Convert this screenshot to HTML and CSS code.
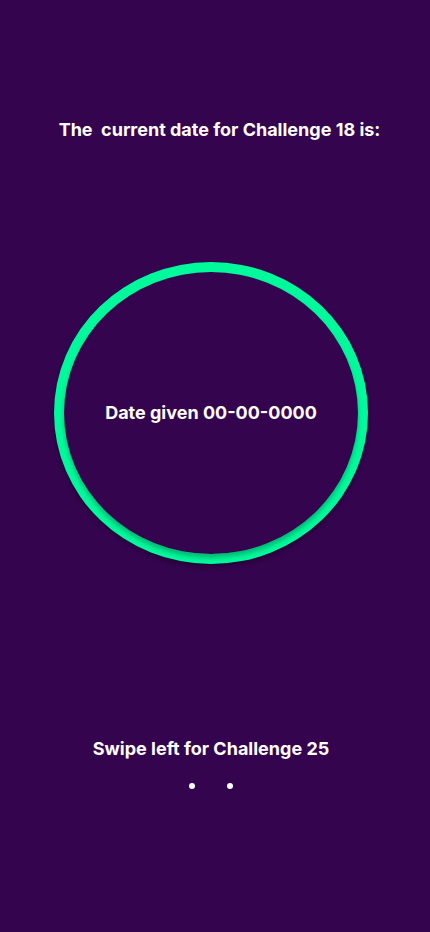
FILE: index.html
```html
<!DOCTYPE html>
<html>
<head>
<meta charset="utf-8">
<link rel="stylesheet" href="styles.css">
</head>
<body>
<main class="screen">
  <h1 class="title">The&nbsp; current date for Challenge 18 is:</h1>
  <div class="ring">
    <p class="date">Date given 00-00-0000</p>
  </div>
  <p class="swipe">Swipe left for Challenge 25</p>
  <div class="dots"><span class="dot"></span><span class="dot"></span></div>
</main>
</body>
</html>
```

FILE: styles.css
```css
html, body {
  margin: 0;
  padding: 0;
  background: #35044f;
}
.screen {
  width: 430px;
  height: 932px;
  box-sizing: border-box;
  padding: 119px 8px 0 0;
  display: flex;
  flex-direction: column;
  align-items: center;
  font-family: Inter, "Noto Sans", sans-serif;
  color: #ffffff;
}
.title {
  margin: 0 0 0 17px;
  font-size: 18px;
  line-height: 22px;
  font-weight: 700;
  white-space: nowrap;
}
.ring {
  margin-top: 121px;
  width: 314px;
  height: 302px;
  box-sizing: border-box;
  border: 10px solid #00f99b;
  border-radius: 50%;
  display: flex;
  align-items: center;
  justify-content: center;
  box-shadow: 0 4px 4px rgba(0, 0, 0, 0.25);
  position: relative;
}
.ring::after {
  content: "";
  position: absolute;
  inset: 0;
  border-radius: 50%;
  box-shadow: 0 4px 4px rgba(0, 0, 0, 0.25);
  pointer-events: none;
}
.date {
  margin: 0;
  font-size: 18px;
  line-height: 22px;
  font-weight: 700;
}
.swipe {
  margin: 174px 0 0 0;
  font-size: 18px;
  line-height: 22px;
  font-weight: 700;
}
.dots {
  margin-top: 23px;
  display: flex;
  gap: 32px;
}
.dot {
  width: 6px;
  height: 6px;
  border-radius: 50%;
  background: #ffffff;
}
```
